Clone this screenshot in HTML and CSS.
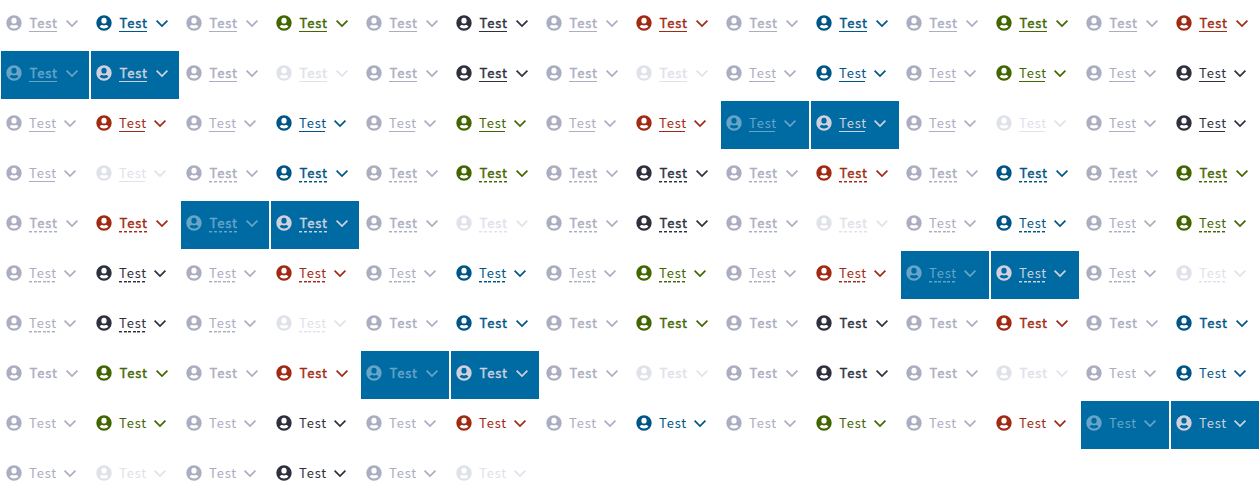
FILE: index.html
```
<!DOCTYPE html>
<html lang="en">
<head>
<meta charset="utf-8">
<title>Link buttons</title>
<link rel="stylesheet" href="styles.css">
</head>
<body>
<main class="grid" id="grid"></main>
<template id="link">
<div class="link">
<svg class="avatar" viewBox="0 0 16 16"><path fill-rule="evenodd" d="M8 .3a7.700 7.700 0 1 0 0 15.400A7.700 7.700 0 0 0 8 .3ZM8 2.800a2.650 2.900 0 1 1 0 5.800A2.650 2.900 0 0 1 8 2.800ZM3.600 11.700c.6-1 1.400-1.700 2.500-1.700.6.3 1.200.5 1.900.5s1.300-.2 1.900-.5c1.100 0 1.900.7 2.500 1.700A5.600 5.600 0 0 1 8 13.500a5.600 5.600 0 0 1-4.400-1.800Z"/></svg>
<span class="label">Test</span>
<svg class="chevron" viewBox="0 0 12 7"><path d="M.6.6 6 6.100 11.400.6"/></svg>
</div>
</template>
<script src="links.js"></script>
</body>
</html>
```
FILE: styles.css
```
body {
  margin: 0;
  background: #fff;
  font-family: "Noto Sans CJK JP", "Noto Sans", sans-serif;
}
.grid {
  display: grid;
  grid-template-columns: repeat(14, 90px);
  grid-auto-rows: 50px;
}
.link {
  display: flex;
  align-items: flex-start;
  box-sizing: border-box;
  margin: 1px;
  padding: 14px 0 0 5px;
  color: #abadc0;
}
.avatar {
  flex: none;
  width: 16px;
  height: 16px;
  fill: currentColor;
}
.label {
  box-sizing: border-box;
  width: 26px;
  height: 19px;
  margin: -2px 9px 0 7px;
  font-size: 13px;
  line-height: 20px;
  letter-spacing: 0.85px;
  white-space: nowrap;
}
.bold .label {
  width: 28px;
  padding-left: 0.4px;
  letter-spacing: 0.95px;
  -webkit-text-stroke: 0.4px currentColor;
}
.solid .label { border-bottom: 1px solid; }
.dashed .label {
  --soft: color-mix(in srgb, currentColor 45%, transparent);
  height: 20px;
  background:
    repeating-linear-gradient(90deg, currentColor 0 3px, transparent 3px 4.600px) 0 18px / 100% 1px no-repeat,
    repeating-linear-gradient(90deg, var(--soft) 0 3px, transparent 3px 4.600px) 0 19px / 100% 1px no-repeat;
}
.dashed.bold .label {
  background:
    repeating-linear-gradient(90deg, currentColor 0 3px, transparent 3px 5px) 0 18px / 100% 1px no-repeat,
    repeating-linear-gradient(90deg, var(--soft) 0 3px, transparent 3px 5px) 0 19px / 100% 1px no-repeat;
}
.chevron {
  flex: none;
  width: 12px;
  height: 7px;
  margin-top: 5px;
  fill: none;
  stroke: currentColor;
  stroke-width: 1.7;
  overflow: visible;
}
.blue { color: #005587; }
.green { color: #426600; }
.dark { color: #2e303e; }
.red { color: #a12a12; }
.faint { color: #e0e2ea; }
.inverse { background: #006ba3; color: #d1d1de; }
.inverse.disabled { color: #66a5c8; }
```
FILE: links.js
```
const grid = document.getElementById("grid");
const template = document.getElementById("link").content.firstElementChild;
const variants = ["blue", "green", "dark", "red", "blue", "green", "red", "inverse", "faint", "dark", "faint"];

function addLink(...classes) {
  const link = template.cloneNode(true);
  link.classList.add(...classes);
  grid.append(link);
}

for (const line of ["solid", "dashed", "plain"]) {
  for (const weight of ["bold", "regular"]) {
    for (const variant of variants) {
      if (variant === "inverse") addLink(line, weight, "inverse", "disabled");
      else addLink(line, weight, "disabled");
      addLink(line, weight, variant);
    }
  }
}
```
